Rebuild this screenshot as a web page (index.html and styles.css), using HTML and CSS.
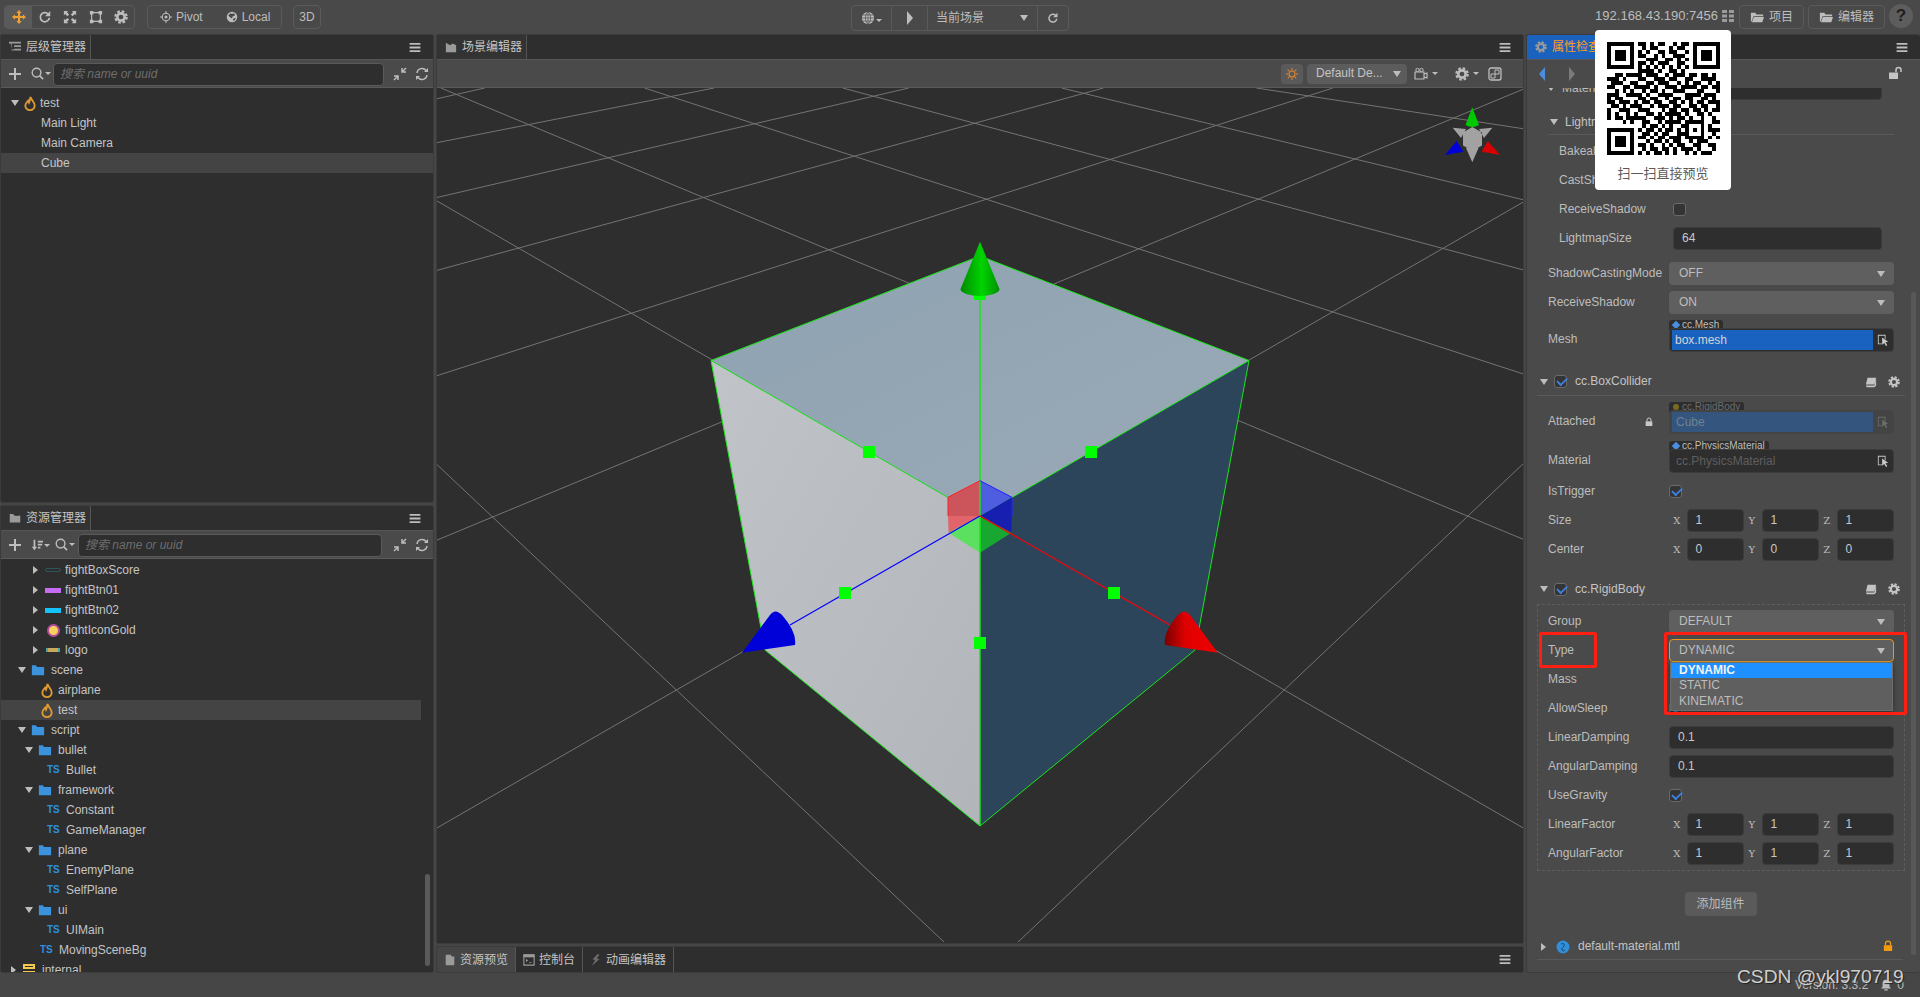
FILE: index.html
```
<!DOCTYPE html>
<html lang="zh">
<head>
<meta charset="utf-8">
<title>Cocos Creator</title>
<link rel="stylesheet" href="styles.css">
</head>
<body>
<svg class="defs" aria-hidden="true">
  <symbol id="i-move" viewBox="0 0 16 16"><path d="M8 0l3 3.5H9.2v3.3h3.3V5L16 8l-3.500 3V9.200H9.200v3.300H11L8 16l-3-3.500h1.800V9.200H3.500V11L0 8l3.500-3v1.800h3.300V3.500H5z"/></symbol>
  <symbol id="i-rotate" viewBox="0 0 16 16"><path d="M13 9a5.200 5.200 0 1 1-1.500-4.500" fill="none" stroke="currentColor" stroke-width="2"/><path d="M14 1v6H8z"/></symbol>
  <symbol id="i-scale" viewBox="0 0 16 16"><path d="M1 1h5L4.500 2.500 7 5 5 7 2.500 4.500 1 6zM15 1v5l-1.500-1.500L11 7 9 5l2.500-2.500L10 1zM1 15v-5l1.500 1.500L5 9l2 2-2.500 2.500L6 15zM15 15h-5l1.500-1.500L9 11l2-2 2.500 2.500L15 10z"/></symbol>
  <symbol id="i-rect" viewBox="0 0 16 16"><path d="M3 3h10v10H3z" fill="none" stroke="currentColor" stroke-width="1.300"/><path d="M1 1h4v4H1zM11 1h4v4h-4zM1 11h4v4H1zM11 11h4v4h-4z"/></symbol>
  <symbol id="i-gear" viewBox="0 0 16 16"><circle cx="8" cy="8" r="4.200" fill="none" stroke="currentColor" stroke-width="3"/><circle cx="8" cy="8" r="6.500" fill="none" stroke="currentColor" stroke-width="2.500" stroke-dasharray="3 2.100"/></symbol>
  <symbol id="i-pivot" viewBox="0 0 16 16"><circle cx="8" cy="8" r="5" fill="none" stroke="currentColor" stroke-width="1.500"/><circle cx="8" cy="8" r="2"/><path d="M7.300 0h1.400v3.500H7.300zM7.300 12.500h1.400V16H7.300zM0 7.300h3.500v1.400H0zM12.500 7.300H16v1.400h-3.500z"/></symbol>
  <symbol id="i-local" viewBox="0 0 16 16"><path d="M8 1a7 7 0 1 0 0 14A7 7 0 0 0 8 1zM3 6l3-3 2 1 3-1 1 3-3 1-1 3-3-2zM9 13l1-3 3-1-1 3z" fill-rule="evenodd"/></symbol>
  <symbol id="i-globe" viewBox="0 0 16 16"><circle cx="8" cy="8" r="7"/><path d="M8 1v14M1 8h14M2 4.500h12M2 11.500h12M8 1C4 4 4 12 8 15M8 1c4 3 4 11 0 14" fill="none" stroke="#4a4a4a" stroke-width=".8"/></symbol>
  <symbol id="i-folder" viewBox="0 0 16 16"><path d="M1 3h5l1.500 2H15v2H4L2 13H1zM4.500 8H16l-2 6H2.200z"/></symbol>
  <symbol id="i-folder-solid" viewBox="0 0 16 16"><path d="M1 2.500h4.500L7 4.500h8V14H1z"/><path d="M7.500 3h6v1.500H8z" fill="#2e2e2e"/></symbol>
  <symbol id="i-fire" viewBox="0 0 12 16"><path d="M6.500 1C7 4 11 6.500 11 10.200 11 13 8.800 15 6 15S1 13 1 10.200C1 7.500 3 6.500 4 5c.5 1 .8 1.500 1 2 .7-1.500 1.200-3.500 1.500-6z" fill="none" stroke="#e09a32" stroke-width="2"/></symbol>
  <symbol id="i-menu" viewBox="0 0 12 10"><path d="M0 0h12v2H0zM0 4h12v2H0zM0 8h12v2H0z"/></symbol>
  <symbol id="i-sort" viewBox="0 0 14 14"><path d="M3 1h2v8h2l-3 4-3-4h2zM8 2h6v2H8zM8 5.500h5v2H8zM8 9h3v2H8z"/></symbol>
  <symbol id="i-plus" viewBox="0 0 12 12"><path d="M5 0h2v5h5v2H7v5H5V7H0V5h5z"/></symbol>
  <symbol id="i-search" viewBox="0 0 14 14"><circle cx="6" cy="6" r="4.700" fill="none" stroke="currentColor" stroke-width="1.500"/><path d="M9.500 9.500L13 13" stroke="currentColor" stroke-width="1.800"/></symbol>
  <symbol id="i-collapse" viewBox="0 0 14 14"><path d="M13 1L9 5M9 1v4h4M1 13l4-4M5 13V9H1" fill="none" stroke="currentColor" stroke-width="1.500"/></symbol>
  <symbol id="i-refresh" viewBox="0 0 14 14"><path d="M2 6a5 5 0 0 1 9-2.500M12 8a5 5 0 0 1-9 2.500" fill="none" stroke="currentColor" stroke-width="1.400"/><path d="M13 1v4H9zM1 13V9h4z"/></symbol>
  <symbol id="i-tree" viewBox="0 0 14 14"><path d="M0 1h14v2H0zM6 5h8v2H6zM6 9h8v2H6zM2 3h1v8h3v-1H3z"/></symbol>
  <symbol id="i-scene" viewBox="0 0 14 14"><path d="M1 2l5 3 3-2 4 2v8H1z"/></symbol>
  <symbol id="i-doc" viewBox="0 0 14 14"><path d="M2 1h6l1 2h3v10H2z"/></symbol>
  <symbol id="i-console" viewBox="0 0 14 14"><path d="M1 1h12v12H1z" fill="none" stroke="currentColor" stroke-width="1.300"/><path d="M1 1h12v2.500H1zM3.500 6l2 1.500-2 1.500M7 10h3" stroke="currentColor" stroke-width=".8"/></symbol>
  <symbol id="i-anim" viewBox="0 0 12 14"><path d="M8 0L2 6l3 1-4 7 9-8-3-1 3-4z"/></symbol>
  <symbol id="i-light" viewBox="0 0 14 14"><circle cx="7" cy="7" r="3.500" fill="none" stroke="currentColor" stroke-width="1.200"/><path d="M7 0v2.500M7 11.500V14M0 7h2.500M11.500 7H14M2 2l1.800 1.800M10.200 10.200L12 12M2 12l1.800-1.800M10.200 3.800L12 2" fill="none" stroke="currentColor" stroke-width="1.200"/></symbol>
  <symbol id="i-camera" viewBox="0 0 14 14"><path d="M1 5h9v7H1zM10 7l3-1v5l-3-1z" fill="none" stroke="currentColor" stroke-width="1.200"/><circle cx="3.500" cy="3" r="1.700" fill="none" stroke="currentColor"/><circle cx="7.500" cy="3" r="1.700" fill="none" stroke="currentColor"/></symbol>
  <symbol id="i-2d" viewBox="0 0 14 14"><rect x="1" y="1" width="12" height="12" rx="2" fill="none" stroke="currentColor" stroke-width="1.300"/><path d="M7 3h4v4H7zM3 7h4v4H3z" fill="none" stroke="currentColor"/></symbol>
  <symbol id="i-grid" viewBox="0 0 14 14"><path d="M1 1h5v3H1zM8 1h5v3H8zM1 5.500h5v3H1zM8 5.500h5v3H8zM1 10h5v3H1zM8 10h5v3H8z"/></symbol>
  <symbol id="i-lock" viewBox="0 0 12 14"><path d="M3 6V4a3 3 0 0 1 6 0v2" fill="none" stroke="currentColor" stroke-width="1.500"/><path d="M1 6h10v7H1z"/></symbol>
  <symbol id="i-unlock" viewBox="0 0 14 14"><path d="M7 6V4a2.500 2.500 0 0 1 5 0v2" fill="none" stroke="currentColor" stroke-width="1.500"/><path d="M0 6.500h9V13H0z"/></symbol>
  <symbol id="i-book" viewBox="0 0 14 14"><path d="M3 2h10l-2 8H1zM1 11h10l2-8v8l-2 2H2z"/></symbol>
  <symbol id="i-pick" viewBox="0 0 14 14"><path d="M1 1h9v5H9V2H2v9h4v1H1z"/><path d="M6 4l7 5-3 .5 2 3.500-1.500 1-2-3.500L6 12.500z"/></symbol>
  <symbol id="i-bell" viewBox="0 0 14 14"><path d="M7 1c3 0 4 2 4 4v4l2 2H1l2-2V5c0-2 1-4 4-4zM5 12h4v1.500H5z"/></symbol>
  <symbol id="i-material" viewBox="0 0 14 14"><circle cx="7" cy="7" r="6.500"/><path d="M5 4c2-1 4 0 3 2S5 8 6 10c1 1 2 1 3 0" fill="none" stroke="#2e2e2e" stroke-width=".8"/></symbol>
  <symbol id="i-db" viewBox="0 0 14 14"><path d="M1 1h12v5H1zM1 8h12v5H1z"/><path d="M3 3h8v1H3zM3 10h8v1H3z" fill="#2e2e2e"/></symbol>
</svg>

<div class="app">
  <header class="topbar">
    <div class="top-left">
      <div class="group">
        <span class="tool tool-active"><svg class="ic14 orange"><use href="#i-move"/></svg></span>
        <span class="tool"><svg class="ic14"><use href="#i-rotate"/></svg></span>
        <span class="tool"><svg class="ic14"><use href="#i-scale"/></svg></span>
        <span class="tool"><svg class="ic14"><use href="#i-rect"/></svg></span>
        <span class="tool"><svg class="ic14"><use href="#i-gear"/></svg></span>
      </div>
      <div class="group group-pivot">
        <span class="labeled"><svg class="ic12"><use href="#i-pivot"/></svg>Pivot</span>
        <span class="labeled"><svg class="ic12"><use href="#i-local"/></svg>Local</span>
      </div>
      <div class="group group-3d">3D</div>
    </div>
    <div class="group group-play">
      <span class="play-cell play-globe"><svg class="ic14"><use href="#i-globe"/></svg><i class="caret-s"></i></span>
      <span class="play-cell play-btn"><i class="caret-r big"></i></span>
      <span class="play-cell play-scene">当前场景<i class="caret-d"></i></span>
      <span class="play-cell play-reload"><svg class="ic12"><use href="#i-rotate"/></svg></span>
    </div>
    <div class="top-right">
      <span class="ip">192.168.43.190:7456</span>
      <svg class="ic14 dim"><use href="#i-grid"/></svg>
      <span class="group btn-project"><svg class="ic14"><use href="#i-folder"/></svg>项目</span>
      <span class="group btn-editor"><svg class="ic14"><use href="#i-folder"/></svg>编辑器</span>
      <span class="help">?</span>
    </div>
  </header>

  <main class="workspace">
    <div class="col-left">
      <section class="panel">
        <div class="tabbar">
          <div class="tab"><svg class="ic12 dim"><use href="#i-tree"/></svg>层级管理器</div>
          <svg class="menu"><use href="#i-menu"/></svg>
        </div>
        <div class="toolbar">
          <svg class="ic12 tb-plus"><use href="#i-plus"/></svg>
          <span class="tb-search"><svg class="ic14"><use href="#i-search"/></svg><i class="caret-s"></i></span>
          <div class="search">搜索 name or uuid</div>
          <svg class="ic14 tb-collapse"><use href="#i-collapse"/></svg>
          <svg class="ic14 tb-refresh"><use href="#i-refresh"/></svg>
        </div>
        <div class="tree tree-hier">
          <div class="row h0"><i class="caret-d"></i><svg class="ic-fire"><use href="#i-fire"/></svg>test</div>
          <div class="row h1">Main Light</div>
          <div class="row h1">Main Camera</div>
          <div class="row h1 selected">Cube</div>
        </div>
      </section>

      <section class="panel">
        <div class="tabbar">
          <div class="tab"><svg class="ic12 dim"><use href="#i-folder-solid"/></svg>资源管理器</div>
          <svg class="menu"><use href="#i-menu"/></svg>
        </div>
        <div class="toolbar">
          <svg class="ic12 tb-plus"><use href="#i-plus"/></svg>
          <span class="tb-sort"><svg class="ic12"><use href="#i-sort"/></svg><i class="caret-s"></i></span>
          <span class="tb-search tb-search-assets"><svg class="ic14"><use href="#i-search"/></svg><i class="caret-s"></i></span>
          <div class="search search-assets">搜索 name or uuid</div>
          <svg class="ic14 tb-collapse tb-collapse-assets"><use href="#i-collapse"/></svg>
          <svg class="ic14 tb-refresh"><use href="#i-refresh"/></svg>
        </div>
        <div class="tree tree-assets">
          <div class="row a3"><i class="caret-r"></i><span class="thumb"><i class="sw sw-box"></i></span>fightBoxScore</div>
          <div class="row a3"><i class="caret-r"></i><span class="thumb"><i class="sw sw-purple"></i></span>fightBtn01</div>
          <div class="row a3"><i class="caret-r"></i><span class="thumb"><i class="sw sw-cyan"></i></span>fightBtn02</div>
          <div class="row a3"><i class="caret-r"></i><span class="thumb"><i class="sw sw-gold"></i></span>fightIconGold</div>
          <div class="row a3"><i class="caret-r"></i><span class="thumb"><i class="sw sw-logo"></i></span>logo</div>
          <div class="row a1"><i class="caret-d"></i><svg class="ic-folder"><use href="#i-folder-solid"/></svg>scene</div>
          <div class="row f2"><svg class="ic-fire"><use href="#i-fire"/></svg>airplane</div>
          <div class="row f2 selected sel-short"><svg class="ic-fire"><use href="#i-fire"/></svg>test</div>
          <div class="row a1"><i class="caret-d"></i><svg class="ic-folder"><use href="#i-folder-solid"/></svg>script</div>
          <div class="row a2"><i class="caret-d"></i><svg class="ic-folder"><use href="#i-folder-solid"/></svg>bullet</div>
          <div class="row t3"><b class="ts">TS</b>Bullet</div>
          <div class="row a2"><i class="caret-d"></i><svg class="ic-folder"><use href="#i-folder-solid"/></svg>framework</div>
          <div class="row t3"><b class="ts">TS</b>Constant</div>
          <div class="row t3"><b class="ts">TS</b>GameManager</div>
          <div class="row a2"><i class="caret-d"></i><svg class="ic-folder"><use href="#i-folder-solid"/></svg>plane</div>
          <div class="row t3"><b class="ts">TS</b>EnemyPlane</div>
          <div class="row t3"><b class="ts">TS</b>SelfPlane</div>
          <div class="row a2"><i class="caret-d"></i><svg class="ic-folder"><use href="#i-folder-solid"/></svg>ui</div>
          <div class="row t3"><b class="ts">TS</b>UIMain</div>
          <div class="row t2"><b class="ts">TS</b>MovingSceneBg</div>
          <div class="row a0"><i class="caret-r"></i><svg class="ic-db"><use href="#i-db"/></svg>internal</div>
          <i class="scrollbar scroll-assets"></i>
        </div>
      </section>
    </div>

    <div class="col-center">
      <section class="panel">
        <div class="tabbar">
          <div class="tab"><svg class="ic12 dim"><use href="#i-scene"/></svg>场景编辑器</div>
          <svg class="menu"><use href="#i-menu"/></svg>
        </div>
        <div class="toolbar toolbar-scene">
          <span class="light-btn"><svg class="ic12"><use href="#i-light"/></svg></span>
          <span class="select-mini">Default De...<i class="caret-d"></i></span>
          <span class="scene-tool tool-cam"><svg class="ic14"><use href="#i-camera"/></svg><i class="caret-s"></i></span>
          <span class="scene-tool tool-gear"><svg class="ic14"><use href="#i-gear"/></svg><i class="caret-s"></i></span>
          <svg class="ic14 tool-2d"><use href="#i-2d"/></svg>
        </div>
        <div class="canvas">
          <svg class="scene" viewBox="437 88 1086 854" width="1086" height="854">
            <defs>
              <linearGradient id="g-top" x1="0" y1="0" x2="1" y2="1"><stop offset="0" stop-color="#8fa3b2"/><stop offset="1" stop-color="#9aa9b6"/></linearGradient>
              <linearGradient id="g-left" x1="0" y1="0" x2="1" y2="1"><stop offset="0" stop-color="#c0c3c7"/><stop offset="1" stop-color="#b2b6ba"/></linearGradient>
              <linearGradient id="g-green" x1="0" y1="0" x2="1" y2="0"><stop offset="0" stop-color="#008a00"/><stop offset=".55" stop-color="#00d400"/><stop offset="1" stop-color="#009000"/></linearGradient>
              <linearGradient id="g-red" x1="0" y1="0" x2="1" y2="0"><stop offset="0" stop-color="#7a0000"/><stop offset=".4" stop-color="#e00000"/><stop offset="1" stop-color="#ee0000"/></linearGradient>
            </defs>
            <g class="grid" transform="translate(436 88) scale(.6952 .5485)">
              <path d="M0 685L740 1568M0 205L1568 1352M7 0L1568 825M300 0L1568 523M585 0L1568 333M900 0L1568 205M1180 0L1568 75"/>
              <path d="M828 1568L1568 680M0 1350L1568 205M0 825L1568 0M0 525L1290 0M0 333L960 0M0 200L680 0M0 100L400 0M0 20L70 0"/>
            </g>
            <polygon points="980,256 1249,360.500 980,516 711,360.500" fill="url(#g-top)"/>
            <polygon points="711,360.500 980,516 980,826 765,650" fill="url(#g-left)"/>
            <polygon points="1249,360.500 980,516 980,826 1195,650" fill="#2d455b"/>
            <path class="edge" d="M980 256L1249 360.500L1195 650L980 826L765 650L711 360.500ZM711 360.500L980 516L1249 360.500"/>
            <polygon points="980,480.700 948,497.300 948,516 980,516" fill="#cc555c"/>
            <polygon points="948,516 980,516 948.600,532.700" fill="#e0646a"/>
            <polygon points="980,480.700 1012,497.300 980,516" fill="#4f5de0"/>
            <polygon points="1012,497.300 1011.500,532.700 980,516" fill="#161fb0"/>
            <polygon points="948.600,532.700 980,516 980,552.700" fill="#5ce060"/>
            <polygon points="980,516 1011.400,532.700 980,552.700" fill="#18a832"/>
            <path class="axis-g" d="M980 289V826"/>
            <path class="axis-b" d="M980 516L790 625"/>
            <path class="axis-r" d="M980 516L1170 625"/>
            <path class="mini-r" d="M948 516V497.300L980 480.700"/>
            <path class="mini-b" d="M980 480.700L1012 497.300V516"/>
            <g fill="#00ff00">
              <rect x="974" y="288" width="12" height="12"/>
              <rect x="863" y="446" width="12" height="12"/>
              <rect x="1085" y="446" width="12" height="12"/>
              <rect x="839" y="587" width="12" height="12"/>
              <rect x="1108" y="587" width="12" height="12"/>
              <rect x="974" y="637" width="12" height="12"/>
            </g>
            <path d="M980 241.700L960.500 289A19.500 7 0 0 0 999.500 289Z" fill="url(#g-green)"/>
            <path d="M742 652.700L770 615Q775 608 782 615Q797 632 795 645Z" fill="#0000d8"/>
            <path d="M1217.700 652.700L1190 615Q1184 608 1178 615Q1163 632 1165 645Z" fill="url(#g-red)"/>
            <g class="gizmo">
              <path d="M1472.300 127L1482 132.500V145.500L1472.300 151L1463 145.500V132.500ZM1452.700 127.700L1466 129L1461 138ZM1492.300 127.700L1479 129L1484 138ZM1472.300 162.300L1466 148H1478.500Z" fill="#a2a2a2"/>
              <path d="M1472.300 107.300L1465.500 125Q1472.300 129 1479 125Z" fill="#00c800"/>
              <path d="M1445 155L1456.700 141L1463.300 151.700Z" fill="#0000d8"/>
              <path d="M1500 155L1487.700 141L1481.700 151.700Z" fill="#d80000"/>
            </g>
          </svg>
        </div>
      </section>
      <section class="panel panel-bottom">
        <div class="tabbar tabbar-bottom">
          <div class="tab tab-b tab-b1"><svg class="ic12 dim"><use href="#i-doc"/></svg>资源预览</div>
          <div class="tab tab-b tab-b2"><svg class="ic12 dim"><use href="#i-console"/></svg>控制台</div>
          <div class="tab tab-b tab-b3"><svg class="ic12 dim2"><use href="#i-anim"/></svg>动画编辑器</div>
          <svg class="menu"><use href="#i-menu"/></svg>
        </div>
      </section>
    </div>

    <section class="panel panel-inspector">
      <div class="tabbar">
        <div class="tab tab-inspector"><svg class="ic12 dim"><use href="#i-gear"/></svg>属性检查器</div>
        <svg class="menu"><use href="#i-menu"/></svg>
      </div>
      <div class="toolbar toolbar-insp">
        <i class="caret-l"></i>
        <i class="caret-r big nav-next"></i>
        <svg class="ic14 insp-lock"><use href="#i-unlock"/></svg>
      </div>
      <div class="insp-body">
        <div class="prop nested first"><label><i class="caret-d tiny"></i>Material</label><span class="input"></span></div>
        <div class="head head-light"><i class="caret-d"></i>Lightmap Settings</div>
        <div class="prop nested tight"><label>Bakeable</label><span class="value"></span></div>
        <div class="prop nested"><label>CastShadow</label><span class="value"></span></div>
        <div class="prop nested"><label>ReceiveShadow</label><span class="value"><i class="check"></i></span></div>
        <div class="prop nested"><label>LightmapSize</label><span class="input">64</span></div>
        <div class="prop gap12"><label>ShadowCastingMode</label><span class="select">OFF<i class="caret-d"></i></span></div>
        <div class="prop"><label>ReceiveShadow</label><span class="select">ON<i class="caret-d"></i></span></div>
        <div class="prop prop-asset"><label>Mesh</label>
          <div class="asset"><span class="asset-tag"><i class="dot"></i>cc.Mesh</span>
            <div class="asset-field"><span class="asset-name">box.mesh</span><svg class="ic12 pick"><use href="#i-pick"/></svg></div></div>
        </div>
        <div class="head head-comp"><i class="caret-d"></i><i class="check on"></i><span class="comp-name">cc.BoxCollider</span><svg class="ic12 comp-book"><use href="#i-book"/></svg><svg class="ic12 comp-gear"><use href="#i-gear"/></svg></div>
        <div class="comp-plain">
          <div class="prop prop-asset"><label>Attached<svg class="ic-lock"><use href="#i-lock"/></svg></label>
            <div class="asset disabled"><span class="asset-tag"><i class="dot dot-olive"></i>cc.RigidBody</span>
              <div class="asset-field"><span class="asset-name">Cube</span><svg class="ic12 pick"><use href="#i-pick"/></svg></div></div>
          </div>
          <div class="prop prop-asset"><label>Material</label>
            <div class="asset empty"><span class="asset-tag"><i class="dot"></i>cc.PhysicsMaterial</span>
              <div class="asset-field"><span class="asset-name">cc.PhysicsMaterial</span><svg class="ic12 pick"><use href="#i-pick"/></svg></div></div>
          </div>
          <div class="prop"><label>IsTrigger</label><span class="value"><i class="check on"></i></span></div>
          <div class="prop"><label>Size</label><div class="vec"><span><em>X</em><b>1</b></span><span><em>Y</em><b>1</b></span><span><em>Z</em><b>1</b></span></div></div>
          <div class="prop"><label>Center</label><div class="vec"><span><em>X</em><b>0</b></span><span><em>Y</em><b>0</b></span><span><em>Z</em><b>0</b></span></div></div>
        </div>
        <div class="head head-comp head-rigid"><i class="caret-d"></i><i class="check on"></i><span class="comp-name">cc.RigidBody</span><svg class="ic12 comp-book"><use href="#i-book"/></svg><svg class="ic12 comp-gear"><use href="#i-gear"/></svg></div>
        <div class="comp-dashed">
          <div class="prop p-first"><label>Group</label><span class="select">DEFAULT<i class="caret-d"></i></span></div>
          <div class="prop"><label>Type</label><span class="select focus">DYNAMIC<i class="caret-d"></i>
            <span class="dropdown"><span class="opt opt-on">DYNAMIC</span><span class="opt">STATIC</span><span class="opt">KINEMATIC</span></span></span></div>
          <div class="prop"><label>Mass</label></div>
          <div class="prop"><label>AllowSleep</label><span class="value"><i class="check on"></i></span></div>
          <div class="prop"><label>LinearDamping</label><span class="input">0.1</span></div>
          <div class="prop"><label>AngularDamping</label><span class="input">0.1</span></div>
          <div class="prop"><label>UseGravity</label><span class="value"><i class="check on"></i></span></div>
          <div class="prop"><label>LinearFactor</label><div class="vec"><span><em>X</em><b>1</b></span><span><em>Y</em><b>1</b></span><span><em>Z</em><b>1</b></span></div></div>
          <div class="prop"><label>AngularFactor</label><div class="vec"><span><em>X</em><b>1</b></span><span><em>Y</em><b>1</b></span><span><em>Z</em><b>1</b></span></div></div>
        </div>
        <div class="add-wrap"><span class="add-btn">添加组件</span></div>
        <div class="mat-row"><i class="caret-r"></i><svg class="ic-mat"><use href="#i-material"/></svg>default-material.mtl<svg class="ic-matlock"><use href="#i-lock"/></svg></div>
      </div>
      <i class="scrollbar scroll-insp"></i>
    </section>
  </main>

  <footer class="statusbar">
    <span>Version: 3.3.2</span>
    <svg class="ic12 bell"><use href="#i-bell"/></svg>
    <span>0</span>
  </footer>

  <div class="qr-pop">
    <svg class="qr" viewBox="0 0 29 29" width="113" height="113" shape-rendering="crispEdges">
      <path class="qr-f" d="M0 0h7v7H0zM1 1v5h5V1zM2 2h3v3H2zM22 0h7v7h-7zM23 1v5h5V1zM24 2h3v3h-3zM0 22h7v7H0zM1 23v5h5v-5zM2 24h3v3H2z"/>
      <path class="qr-m" d="M8 .5h2M11 .5h1M13 .5h2M17 .5h1M19 .5h2M9 1.500h1M11 1.500h2M16 1.500h1M18 1.500h2M8 2.500h1M10 2.500h1M13 2.500h2M16 2.500h2M20 2.500h1M8 3.500h2M12 3.500h1M14 3.500h1M17 3.500h3M10 4.500h3M15 4.500h2M18 4.500h1M20 4.500h1M8 5.500h2M11 5.500h1M13 5.500h3M18 5.500h2M8 6.500h1M10 6.500h1M12 6.500h1M14 6.500h1M16 6.500h1M18 6.500h1M20 6.500h1M8 7.500h4M13 7.500h1M16 7.500h2M19 7.500h1M2 8.500h2M5 8.500h4M10 8.500h3M15 8.500h1M17 8.500h3M21 8.500h2M24 8.500h2M27 8.500h1M0 9.500h3M4 9.500h1M8 9.500h2M12 9.500h3M16 9.500h2M20 9.500h2M24 9.500h4M1 10.500h3M6 10.500h2M10 10.500h2M13 10.500h3M18 10.500h1M20 10.500h1M22 10.500h2M26 10.500h1M28 10.500h1M0 11.500h2M4 11.500h2M7 11.500h4M12 11.500h1M15 11.500h3M19 11.500h4M24 11.500h2M27 11.500h2M2 12.500h1M4 12.500h1M6 12.500h1M9 12.500h1M11 12.500h2M14 12.500h1M17 12.500h3M23 12.500h2M28 12.500h1M0 13.500h3M5 13.500h4M10 13.500h1M13 13.500h4M20 13.500h4M25 13.500h3M0 14.500h1M2 14.500h2M8 14.500h2M11 14.500h2M15 14.500h1M17 14.500h2M20 14.500h2M24 14.500h2M27 14.500h1M0 15.500h2M3 15.500h3M7 15.500h1M9 15.500h2M12 15.500h2M16 15.500h2M19 15.500h1M21 15.500h1M23 15.500h2M26 15.500h3M1 16.500h2M4 16.500h1M6 16.500h3M11 16.500h1M13 16.500h3M17 16.500h2M21 16.500h2M24 16.500h2M28 16.500h1M0 17.500h1M3 17.500h3M8 17.500h3M14 17.500h1M16 17.500h2M19 17.500h2M22 17.500h2M25 17.500h1M27 17.500h2M0 18.500h1M2 18.500h1M5 18.500h1M7 18.500h1M10 18.500h2M13 18.500h1M15 18.500h4M20 18.500h1M23 18.500h2M26 18.500h1M0 19.500h1M2 19.500h2M5 19.500h5M12 19.500h3M16 19.500h1M18 19.500h2M21 19.500h1M24 19.500h1M27 19.500h1M4 20.500h1M6 20.500h1M9 20.500h2M13 20.500h1M15 20.500h4M20 20.500h5M27 20.500h2M9 21.500h1M11 21.500h2M14 21.500h1M16 21.500h1M19 21.500h2M24 21.500h1M26 21.500h1M8 22.500h1M10 22.500h2M13 22.500h1M15 22.500h2M18 22.500h1M20 22.500h1M22 22.500h1M24 22.500h1M26 22.500h3M9 23.500h2M12 23.500h1M14 23.500h2M18 23.500h3M24 23.500h1M27 23.500h1M8 24.500h2M11 24.500h1M13 24.500h2M16 24.500h3M20 24.500h5M26 24.500h1M28 24.500h1M10 25.500h1M12 25.500h2M15 25.500h1M17 25.500h2M21 25.500h1M23 25.500h3M8 26.500h2M11 26.500h1M14 26.500h1M16 26.500h1M18 26.500h2M22 26.500h2M26 26.500h2M9 27.500h1M11 27.500h2M14 27.500h2M17 27.500h1M19 27.500h3M23 27.500h1M27 27.500h1M8 28.500h1M10 28.500h1M12 28.500h2M15 28.500h1M17 28.500h1M20 28.500h1M22 28.500h1M24 28.500h3"/>
    </svg>
    <div class="qr-cap">扫一扫直接预览</div>
  </div>
  <i class="mark mark-type"></i>
  <i class="mark mark-select"></i>
  <div class="watermark">CSDN @ykl970719</div>
</div>
</body>
</html>
```
FILE: styles.css
```
* { box-sizing: border-box; }
html, body { margin: 0; padding: 0; height: 100%; overflow: hidden; }
body {
  background: #464646;
  color: #bdbdbd;
  font: 12px/1.2 "Liberation Sans", "Noto Sans CJK SC", sans-serif;
}
.defs { position: absolute; width: 0; height: 0; }
svg { fill: currentColor; flex: none; }
i, em { font-style: normal; }
.ic12 { width: 12px; height: 12px; }
.ic14 { width: 14px; height: 14px; }
.orange { color: #f0a030; }
.dim { color: #9a9a9a; }
.dim2 { color: #6c6c6c; }

.caret-d, .caret-s, .caret-r, .caret-l { display: inline-block; flex: none; width: 0; height: 0; border-style: solid; border-color: transparent; }
.caret-d { border-width: 6px 4.5px 0; border-top-color: #bdbdbd; }
.caret-d.tiny { border-width: 4px 3px 0; margin-right: 8px; margin-left: -11px; }
.caret-s { border-width: 3px 3px 0; border-top-color: #bdbdbd; margin-left: 1px; margin-top: 5px; }
.caret-r { border-width: 4.5px 0 4.5px 5.5px; border-left-color: #bdbdbd; }
.caret-r.big { border-width: 7px 0 7px 6px; }
.caret-l { border-width: 7px 6px 7px 0; border-right-color: #4a8ee0; }

.app { position: relative; width: 1920px; height: 997px; display: flex; flex-direction: column; overflow: hidden; }

/* top bar */
.topbar { height: 34px; flex: none; display: grid; grid-template-columns: 1fr auto 1fr; background: #494949; padding-top: 5px; }
.top-left { display: flex; gap: 12px; padding-left: 4px; align-items: flex-start; }
.group { display: flex; align-items: center; height: 24px; border: 1px solid #5a5a5a; border-radius: 4px; }
.tool { width: 25.500px; height: 22px; display: flex; align-items: center; justify-content: center; }
.tool-active { width: 27px; background: #5a5a5a; border-radius: 3px 0 0 3px; }
.group-pivot { width: 135px; padding-left: 12px; gap: 23px; font-size: 12px; }
.labeled { display: flex; align-items: center; gap: 4px; }
.group-3d { width: 28px; justify-content: center; }
.group + .group-3d { margin-left: -1px; }
.group-play { height: 26px; width: 218px; }
.play-cell { height: 100%; display: flex; align-items: center; justify-content: center; }
.play-globe { width: 40px; border-right: 1px solid #5a5a5a; }
.play-btn { width: 36px; border-right: 1px solid #5a5a5a; }
.play-scene { width: 110px; border-right: 1px solid #5a5a5a; justify-content: space-between; padding: 0 9px 0 8px; }
.play-reload { flex: 1; }
.top-right { display: flex; justify-content: flex-end; align-items: flex-start; padding-right: 7px; }
.ip { font-size: 13px; line-height: 22px; margin-right: 3px; }
.top-right > .dim { margin-top: 4px; margin-right: 4px; }
.btn-project, .btn-editor { justify-content: center; gap: 5px; font-size: 12px; }
.btn-project { width: 65px; margin-right: 4px; }
.btn-editor { width: 77px; margin-right: 4px; }
.help { width: 24px; height: 24px; border-radius: 50%; background: #5d5d5d; color: #1f1f1f; font: bold 17px/24px "Liberation Sans", sans-serif; text-align: center; margin-top: -1px; }

/* workspace */
.workspace { flex: 1; min-height: 0; display: grid; grid-template-columns: 434px 1088px 394px; column-gap: 2px; }
.col-left { display: grid; grid-template-rows: 469px 1fr; row-gap: 2px; min-height: 0; }
.col-center { display: grid; grid-template-rows: 1fr 27px; row-gap: 2px; min-height: 0; }
.panel { position: relative; display: flex; flex-direction: column; min-height: 0; overflow: hidden; border: 1px solid #3b3b3b; border-radius: 3px; background: #2e2e2e; }
.tabbar { height: 25px; flex: none; display: flex; align-items: stretch; background: #2e2e2e; border-bottom: 1px solid #555; position: relative; }
.tab { display: flex; align-items: center; gap: 5px; width: 90px; padding-left: 8px; background: #333; border-right: 1px solid #555; color: #c4c4c4; }
.menu { width: 12px; height: 9px; position: absolute; right: 12px; top: 8px; color: #bdbdbd; }
.toolbar { height: 28px; flex: none; display: flex; align-items: center; background: #4a4a4a; border-bottom: 1px solid #5a5a5a; position: relative; }
.tb-plus { margin-left: 8px; }
.tb-sort { display: flex; margin-left: 10px; }
.tb-search { display: flex; margin-left: 10px; }
.tb-search .ic14 { width: 13px; height: 13px; }
.tb-search-assets { margin-left: 5px; }
.search { width: 331px; height: 23px; margin-left: 2px; margin-top: 1px; border: 1px solid #5a5a5a; border-radius: 4px; background: #2e2e2e; color: #6d6d6d; font-style: italic; line-height: 21px; padding-left: 6px; }
.search-assets { width: 304px; margin-left: 3px; }
.tb-collapse { margin-left: 9px; }
.tb-collapse-assets { margin-left: 11px; }
.tb-refresh { margin-left: 8px; }

/* trees */
.tree { flex: 1; min-height: 0; overflow: hidden; position: relative; }
.tree-hier { padding-top: 5px; }
.tree-assets { padding-top: 1px; }
.row { height: 20px; display: flex; align-items: center; white-space: nowrap; color: #c4c4c4; line-height: 20px; position: relative; }
.selected { background: #444; }
.sel-short { margin-right: 12px; }
.h0 { padding-left: 10px; }
.h0 .caret-d { margin-right: 5px; }
.h1 { padding-left: 40px; }
.ic-fire { width: 12px; height: 15px; margin-right: 5px; }
.h0 .ic-fire { margin-right: 4px; }
.a0 { padding-left: 10px; }
.a1 { padding-left: 17px; }
.a2 { padding-left: 24px; }
.a3 { padding-left: 32px; }
.f2 { padding-left: 40px; }
.t3 { padding-left: 46px; }
.t2 { padding-left: 39px; }
.a1 .caret-d, .a2 .caret-d { margin-right: 5px; }
.a3 .caret-r { margin-right: 7px; }
.a0 .caret-r { margin-right: 6px; }
.ic-folder { width: 14px; height: 14px; color: #3a93dc; margin-right: 6px; }
.ic-db { width: 14px; height: 14px; color: #f3c94c; margin-right: 6px; }
.thumb { width: 16px; height: 14px; margin-right: 4px; display: flex; align-items: center; justify-content: center; }
.sw { display: block; }
.sw-box { width: 16px; height: 4px; border: 1px solid #30545e; border-radius: 2px; }
.sw-purple { width: 16px; height: 5px; background: #c66cf2; }
.sw-cyan { width: 16px; height: 5px; background: #14c4f8; }
.sw-gold { width: 13px; height: 13px; border-radius: 50%; background: #f8d25a; border: 2px solid #b24ea0; }
.sw-logo { width: 14px; height: 4px; background: #c9a95a; border-left: 2px solid #4fa3a3; border-right: 2px solid #4fa3a3; }
.ts { width: 19px; color: #2f8fdc; font: bold 10px/20px "Liberation Sans", sans-serif; flex: none; }
.scrollbar { position: absolute; width: 5px; background: #5a5a5a; border-radius: 3px; }
.scroll-assets { left: 424px; top: 315px; height: 92px; }
.scroll-insp { left: 384px; top: 257px; height: 663px; background: #585858; }

/* scene */
.toolbar-scene { justify-content: flex-end; padding-right: 21px; }
.light-btn { width: 22px; height: 20px; border-radius: 4px; background: #5a5a5a; color: #e5892b; display: flex; align-items: center; justify-content: center; margin-right: 4px; }
.select-mini { width: 100px; height: 20px; border-radius: 4px; background: #5c5c5c; display: flex; align-items: center; justify-content: space-between; padding: 0 6px 0 9px; margin-right: 7px; color: #c4c4c4; }
.scene-tool { display: flex; align-items: center; }
.scene-tool .caret-s { margin-top: 0; margin-left: 4px; }
.tool-cam { margin-right: 17px; }
.tool-gear { margin-right: 9px; }
.canvas { flex: 1; min-height: 0; overflow: hidden; background: #2e2e2e; }
.scene { display: block; fill: none; }
.grid path { fill: none; stroke: #747474; stroke-width: 1; vector-effect: non-scaling-stroke; }
.edge { fill: none; stroke: #19e619; stroke-width: 1; }
.axis-g { fill: none; stroke: #19e619; stroke-width: 1.500; }
.axis-b { fill: none; stroke: #0000ff; stroke-width: 1.200; }
.axis-r { fill: none; stroke: #ff0000; stroke-width: 1.200; }
.mini-r { fill: none; stroke: #ff2020; stroke-width: 1; }
.mini-b { fill: none; stroke: #2020ff; stroke-width: 1; }
.panel-bottom { border-top: 1px solid #3b3b3b; }
.tabbar-bottom { border-bottom: 0; height: 26px; }
.tab-b { width: auto; gap: 4px; padding-left: 7px; }
.tab-b1 { width: 79px; background: #454545; }
.tab-b2 { width: 67px; background: #2e2e2e; }
.tab-b3 { width: 91px; background: #2e2e2e; }

/* inspector */
.panel-inspector { background: #4a4a4a; border-right: 0; }
.tab-inspector { width: 90px; background: #1b62be; color: #ff9d1a; border-right: 0; padding-left: 8px; }
.toolbar-insp { border-bottom: 0; }
.toolbar-insp .caret-l { margin-left: 12px; }
.nav-next { border-left-color: #7b7b7b; margin-left: 24px; }
.insp-lock { position: absolute; right: 17px; top: 6px; color: #c4c4c4; }
.insp-body { flex: 1; min-height: 0; overflow: hidden; padding: 0 15px 0 10px; }
.prop { display: flex; height: 23px; margin-top: 6px; padding: 0 11px 0 11px; line-height: 23px; position: relative; }
.prop label { flex: 0 0 121px; display: flex; align-items: center; white-space: nowrap; position: relative; }
.prop > .value, .prop > .input, .prop > .select, .prop > .asset, .prop > .vec { flex: 1; min-width: 0; }
.nested { padding-left: 22px; padding-right: 23px; }
.nested label { flex-basis: 114px; }
.first { margin-top: -11px; }
.tight { margin-top: 5px; }
.gap12 { margin-top: 12px; }
.value { display: flex; align-items: center; }
.input { height: 23px; border: 1px solid #3c3c3c; border-radius: 4px; background: #2e2e2e; color: #c8c8c8; padding-left: 8px; line-height: 21px; }
.select { position: relative; display: flex; align-items: center; justify-content: space-between; height: 23px; border-radius: 4px; background: #5f5f5f; padding: 0 9px 0 10px; }
.select.focus { border: 1px solid #e59a1c; padding: 0 8px 0 9px; }
.dropdown { position: absolute; left: 0; right: 0; top: 22px; height: 49px; background: #5f5f5f; border: 1px solid #6d6d6d; box-shadow: 0 2px 5px rgba(0, 0, 0, .4); z-index: 2; }
.opt { display: block; height: 16px; line-height: 16px; padding-left: 8px; }
.opt-on { background: #1e90ff; color: #f2f2f2; font-weight: bold; height: 15px; line-height: 14px; }
.opt-on + .opt { margin-top: -1px; }
.check { display: block; width: 13px; height: 13px; border: 1px solid #6a6a6a; border-radius: 3px; background: #343434; position: relative; flex: none; }
.check.on::after { content: ""; position: absolute; left: 2px; top: 1px; width: 8px; height: 5px; border-left: 2px solid #3f7fe0; border-bottom: 2px solid #3f7fe0; transform: rotate(-45deg) scale(1, .9); }
.prop-asset { height: 32px; margin-top: 7px; }
.prop-asset label { height: 23px; margin-top: 7px; }
.asset { position: relative; }
.asset-tag { display: flex; align-items: center; gap: 3px; position: absolute; left: 0; top: -1px; height: 10px; padding: 0 4px; background: #2e2e2e; border-radius: 3px 3px 0 0; font-size: 10px; line-height: 10px; color: #bdbdbd; overflow: hidden; }
.dot { width: 6px; height: 6px; background: #4a8ee0; transform: rotate(45deg); flex: none; }
.dot-olive { background: #7a6a20; border-radius: 50%; transform: none; }
.asset-field { position: absolute; left: 0; right: 0; top: 7px; height: 24px; background: #2e2e2e; border: 1px solid #3c3c3c; border-radius: 4px; display: flex; align-items: center; padding: 1px 4px 1px 2px; }
.asset-name { flex: 1; height: 20px; line-height: 20px; background: #1a62c0; padding-left: 3px; color: #d5d5d5; margin-right: 4px; }
.pick { color: #c8c8c8; }
.disabled .asset-tag { color: #6c6c6c; }
.disabled .asset-field { background: #444; border-color: #444; }
.disabled .asset-name { background: #34567e; color: #6f8192; padding-left: 4px; }
.disabled .pick { color: #6c6c6c; }
.empty .asset-name { background: none; color: #5f5f5f; padding-left: 4px; }
.ic-lock { width: 8px; height: 10px; position: absolute; right: 16px; top: 7px; color: #c8c8c8; }
.vec { display: grid; grid-template-columns: repeat(3, 1fr); height: 23px; }
.vec span { display: flex; align-items: center; }
.vec em { flex: 0 0 17.500px; text-align: center; font: 10px/23px "DejaVu Serif", serif; padding-right: 2px; }
.vec b { flex: 1; height: 23px; border: 1px solid #3c3c3c; border-radius: 4px; background: #2e2e2e; color: #c8c8c8; font-weight: normal; padding-left: 8px; line-height: 21px; }
.head { display: flex; align-items: center; position: relative; border-bottom: 1px solid #5a5a5a; color: #c4c4c4; white-space: nowrap; }
.head-light { height: 25px; margin-top: 10px; margin-left: 11px; margin-right: 11px; padding-left: 2px; }
.head-light .caret-d { margin-right: 7px; }
.head-comp { height: 27px; margin-top: 16px; padding: 0 0 1px 3px; }
.head-comp .caret-d { margin-right: 6px; }
.comp-name { margin-left: 8px; }
.comp-book { position: absolute; right: 28px; top: 7px; }
.comp-gear { position: absolute; right: 5px; top: 7px; }
.comp-plain .prop-asset:first-child { margin-top: 7px; }
.head-rigid { border-bottom: 0; height: 28px; margin-top: 15px; padding-bottom: 2px; }
.comp-dashed { border: 1px dashed #5e5e5e; height: 267px; padding-bottom: 6px; }
.comp-dashed .prop { padding-left: 10px; padding-right: 10px; }
.p-first { margin-top: 5px; }
.add-wrap { display: flex; justify-content: center; padding-right: 1px; margin-top: 21px; }
.add-btn { width: 72px; height: 24px; line-height: 24px; background: #5a5a5a; border-radius: 4px; text-align: center; }
.mat-row { display: flex; align-items: center; position: relative; height: 26px; margin-top: 18px; padding-left: 4px; border-bottom: 1px solid #5a5a5a; color: #c4c4c4; margin-right: 2px; }
.mat-row .caret-r { margin-right: 10px; }
.ic-mat { width: 14px; height: 14px; color: #2f8fdc; margin-right: 8px; }
.ic-matlock { width: 10px; height: 12px; position: absolute; right: 10px; top: 6px; color: #f59a0c; }

/* status */
.statusbar { height: 24px; flex: none; display: flex; justify-content: flex-end; align-items: center; gap: 5px; padding: 0 16px 0 0; background: #464646; color: #bdbdbd; }
.bell { margin-left: 7px; }

/* overlays */
.qr-pop { position: absolute; left: 1595px; top: 30px; width: 136px; height: 160px; background: #fff; border-radius: 4px; padding: 12px 0 0 12px; z-index: 5; }
.qr { display: block; }
.qr-f { fill: #000; fill-rule: evenodd; }
.qr-m { fill: none; stroke: #000; stroke-width: 1; }
.qr-cap { margin: 10px 0 0 -12px; text-align: center; font-size: 13px; line-height: 18px; color: #5a5a5a; }
.mark { position: absolute; border: 3px solid #ff1e12; border-radius: 2px; z-index: 4; }
.mark-type { left: 1539px; top: 632px; width: 58px; height: 36px; }
.mark-select { left: 1664px; top: 632px; width: 243px; height: 83px; }
.watermark { position: absolute; left: 1737px; top: 965px; font-size: 19.200px; line-height: 24px; color: #cfcfcf; text-shadow: 1px 1px 1px #222; z-index: 6; white-space: nowrap; }
```
